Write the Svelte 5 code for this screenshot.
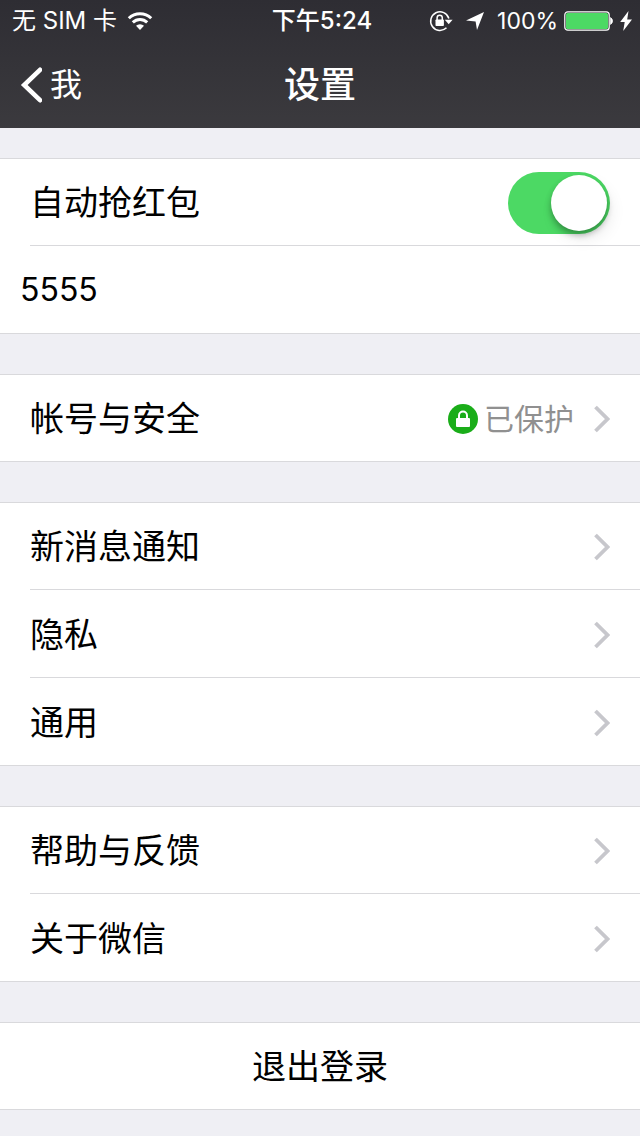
<script>
    let autoGrab = $state(true);
    let amount = $state("5555");

    const groups = [
        [{ label: "帐号与安全", href: "#account", status: "已保护" }],
        [
            { label: "新消息通知", href: "#notifications" },
            { label: "隐私", href: "#privacy" },
            { label: "通用", href: "#general" }
        ],
        [
            { label: "帮助与反馈", href: "#help" },
            { label: "关于微信", href: "#about" }
        ]
    ];
</script>

<header>
    <div class="status-bar">
        <div class="carrier">
            <span>无 SIM 卡</span>
            <svg width="26" height="20" viewBox="0 0 26 20" fill="none" stroke="#fff" stroke-width="3">
                <path d="M1.8 7.2a16 16 0 0 1 22.4 0" />
                <path d="M5.8 11.4a10.3 10.3 0 0 1 14.4 0" />
                <path d="M13 19l-4-4.2a5.8 5.8 0 0 1 8 0z" fill="#fff" stroke="none" />
            </svg>
        </div>
        <time>下午5:24</time>
        <div class="indicators">
            <svg width="24" height="22" viewBox="0 0 24 22" fill="none" stroke="#fff" stroke-width="1.5">
                <path d="M19.9 8.5A9.3 9.3 0 1 0 17.5 17.8" />
                <path d="M15.8 9.7h7.8l-3.9 4.6z" fill="#fff" stroke="none" />
                <rect x="6.5" y="9.5" width="8.4" height="6.5" rx=".8" fill="#fff" stroke="none" />
                <path d="M8.1 10V7.8a2.6 2.6 0 0 1 5.2 0V10" />
            </svg>
            <svg width="20" height="20" viewBox="0 0 20 20" fill="#fff">
                <path d="M19 1L12 19l-1.4-8.6L1 9.6z" />
            </svg>
            <span>100%</span>
            <svg class="battery" width="50" height="20" viewBox="0 0 50 20">
                <rect x=".8" y=".8" width="44.4" height="18.4" rx="3" fill="none" stroke="#fff" stroke-width="1.2" />
                <rect x="2" y="2" width="42" height="16" rx="1.6" fill="#4cd964" />
                <path d="M46.6 6.6a4 4 0 0 1 0 6.8z" fill="#fff" stroke="#fff" stroke-width=".8" />
            </svg>
            <svg width="12" height="20" viewBox="0 0 12 20" fill="#fff">
                <path d="M8.5 0L.2 11h4.5L3.2 20 12 8.4H7.2z" />
            </svg>
        </div>
    </div>
    <nav>
        <a class="back" href="#me">
            <svg width="22" height="36" viewBox="0 0 22 36" fill="none" stroke="#fff" stroke-width="4.6" stroke-linecap="round">
                <path d="M20 2.8L4.2 18 20 33.2" />
            </svg>
            <span>我</span>
        </a>
        <h1>设置</h1>
    </nav>
</header>

<main>
    <section class="group">
        <div class="row toggle-row">
            <label for="auto-grab">自动抢红包</label>
            <input id="auto-grab" class="switch" type="checkbox" role="switch" bind:checked={autoGrab} />
        </div>
        <div class="row field-row">
            <input class="field" type="text" aria-label="自动抢红包" bind:value={amount} />
        </div>
    </section>

    {#each groups as items}
        <section class="group">
            {#each items as item}
                <a class="row" href={item.href}>
                    <span class="label">{item.label}</span>
                    {#if item.status}
                        <span class="status">
                            <svg width="30" height="30" viewBox="0 0 30 30">
                                <circle cx="15" cy="15" r="15" fill="#1aad19" />
                                <rect x="8" y="14" width="14" height="9" rx="1" fill="#fff" />
                                <path d="M11 14.5v-3a4 4 0 0 1 8 0v3" fill="none" stroke="#fff" stroke-width="2" />
                            </svg>
                            {item.status}
                        </span>
                    {/if}
                    <svg width="16" height="28" viewBox="0 0 16 28" fill="none" stroke="#c7c7cc" stroke-width="3.8">
                        <path d="M1.5 2L13.5 14 1.5 26" />
                    </svg>
                </a>
            {/each}
        </section>
    {/each}

    <section class="group">
        <button class="row logout" type="button">退出登录</button>
    </section>
</main>

<style>
    :global(body) {
        background: #efeff4;
        color: #000;
        font-family: Inter, "Noto Sans CJK SC", sans-serif;
    }

    header {
        background: linear-gradient(#2e2d33, #3b3a3e);
        color: #fff;
    }

    svg {
        display: block;
        flex: none;
    }

    .status-bar {
        box-sizing: border-box;
        display: grid;
        grid-template-columns: 1fr auto 1fr;
        align-items: center;
        height: 40px;
        padding: 2px 8px 0 12px;
        font-size: 24px;
        line-height: 38px;
    }

    .carrier, .indicators {
        display: flex;
        align-items: center;
        gap: 12px;
    }

    .carrier {
        gap: 10px;
    }

    .indicators {
        justify-content: flex-end;
        font-size: 23px;
    }

    .battery {
        margin: 0 -6px;
    }

    time {
        font-weight: 500;
    }

    nav {
        box-sizing: border-box;
        display: grid;
        grid-template-columns: 1fr auto 1fr;
        align-items: center;
        height: 88px;
        padding: 2px 20px 0;
    }

    .back {
        display: flex;
        align-items: center;
        gap: 8px;
        color: #fff;
        font-size: 32px;
        line-height: 40px;
        text-decoration: none;
    }

    h1 {
        margin: 0;
        font-size: 36px;
        font-weight: 500;
        line-height: 48px;
    }

    main {
        display: flex;
        flex-direction: column;
        gap: 40px;
        padding: 30px 0 26px;
    }

    .group {
        background: #fff;
        border-top: 1px solid #d9d9dc;
    }

    .row {
        box-sizing: border-box;
        display: flex;
        align-items: center;
        min-height: 88px;
        margin-left: 30px;
        padding: 2px 30px 0 0;
        border-bottom: 1px solid #d9d9dc;
        color: #000;
        font-size: 34px;
        line-height: 48px;
        text-decoration: none;
    }

    .row:first-child {
        min-height: 87px;
    }

    .row:last-child {
        margin-left: 0;
        padding-left: 30px;
    }

    .label, .toggle-row label {
        flex: 1;
    }

    .row.field-row {
        padding-top: 0;
        padding-left: 20px;
    }

    .field {
        flex: 1;
        min-width: 0;
        padding: 0;
        border: none;
        outline: none;
        background: none;
        color: #000;
        font-family: inherit;
        font-size: 32px;
        line-height: 48px;
    }

    .switch {
        appearance: none;
        width: 102px;
        height: 62px;
        margin: 0;
        padding: 3px;
        box-sizing: border-box;
        border-radius: 31px;
        background: #e5e5ea;
    }

    .switch::before {
        content: "";
        display: block;
        width: 56px;
        height: 56px;
        border-radius: 50%;
        background: #fff;
        box-shadow: 0 4px 6px rgba(0, 0, 0, 0.3), 4px 8px 16px rgba(0, 0, 0, 0.08);
    }

    .switch:checked {
        background: #4cd964;
    }

    .switch:checked::before {
        margin-left: auto;
    }

    .status {
        display: flex;
        align-items: center;
        gap: 6px;
        margin-right: 20px;
        color: #909090;
        font-size: 30px;
    }

    .row.logout {
        justify-content: center;
        width: 100%;
        border-width: 0 0 1px;
        background: none;
        font-family: inherit;
    }
</style>
